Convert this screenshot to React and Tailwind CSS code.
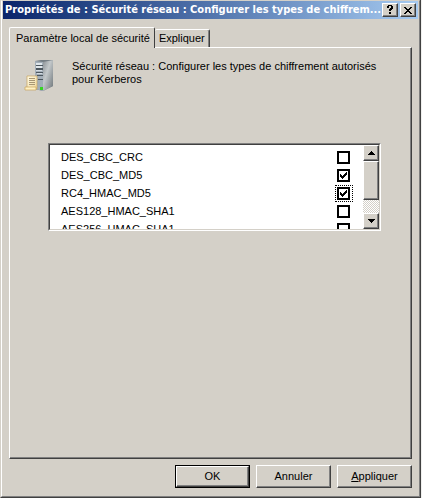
import { useState } from "react";

const raised =
  "border border-t-white border-l-white border-r-[#404040] border-b-[#404040] shadow-[inset_-1px_-1px_0_#808080] bg-[#d4d0c8]";

const encryptionTypes = [
  { id: "des-crc", label: "DES_CBC_CRC", checked: false },
  { id: "des-md5", label: "DES_CBC_MD5", checked: true },
  { id: "rc4", label: "RC4_HMAC_MD5", checked: true },
  { id: "aes128", label: "AES128_HMAC_SHA1", checked: false },
  { id: "aes256", label: "AES256_HMAC_SHA1", checked: false },
];

function ServerIcon() {
  return (
    <svg width="32" height="32" viewBox="0 0 32 32" className="flex-none" aria-hidden="true">
      <defs>
        <linearGradient id="side" x1="0" y1="0" x2="1" y2="1">
          <stop offset="0" stopColor="#8b9196" />
          <stop offset="0.4" stopColor="#c3c8ca" />
          <stop offset="1" stopColor="#6d7478" />
        </linearGradient>
        <linearGradient id="paper" x1="0" y1="0" x2="1" y2="1">
          <stop offset="0" stopColor="#fffbe6" />
          <stop offset="1" stopColor="#efd699" />
        </linearGradient>
      </defs>
      <path d="M11 1 L17 0 L29 0 L29 26 L19 31 L11 29 Z" fill="#747d84" />
      <path d="M19 2 L29 0 V26 L19 31 Z" fill="url(#side)" />
      <path d="M11 1 L19 2 V31 L11 29 Z" fill="#a3aeb8" />
      <path d="M12 3h6v2h-6z M12 6h6v2h-6z" fill="#dfe6eb" />
      <path d="M12 5h7v1h-7z M12 8h7v2h-7z M12 12h7v1h-7z M13 15h6v1h-6z M14 19h5v1h-5z" fill="#4c565e" />
      <path d="M12 10h6v1h-6z M13 13h5v1h-5z" fill="#d2dae1" />
      <path d="M16 27h3v3h-3z" fill="#35d421" />
      <path d="M3 16 H13 V29 H3 Z" fill="url(#paper)" stroke="#c9a45c" strokeWidth="0.7" />
      <path d="M5 18.5h6 M5 20.5h6 M5 22.5h6 M5 24.5h6" stroke="#a89674" />
      <path d="M1 27 H12 V30 H1 Z" fill="#fff1c4" stroke="#c9a45c" strokeWidth="0.7" />
    </svg>
  );
}

function TitleButton({ label, children }) {
  return (
    <button type="button" aria-label={label} className={`flex h-3.5 w-4 items-center justify-center ${raised}`}>
      {children}
    </button>
  );
}

function TitleBar() {
  return (
    <header className="flex h-[18px] items-center justify-between bg-linear-to-r from-[#0a246a] to-[#a6caf0] px-0.5">
      <h1 className="font-['DejaVu_Sans_Condensed','DejaVu_Sans',sans-serif] text-[11px] leading-[18px] font-bold whitespace-nowrap text-white">
        Propriétés de : Sécurité réseau : Configurer les types de chiffrem...
      </h1>
      <div className="flex gap-0.5">
        <TitleButton label="Aide">
          <svg width="8" height="10" viewBox="0 0 8 10" shapeRendering="crispEdges">
            <path d="M2 0h4v1h1v3h-1v1h-1v1h-2v-2h1v-1h1v-2h-2v2h-2v-2h1z M3 7h2v2h-2z" />
          </svg>
        </TitleButton>
        <TitleButton label="Fermer">
          <svg width="8" height="7" viewBox="0 0 8 7" shapeRendering="crispEdges">
            <path d="M0 0h2v1h1v1h2v-1h1v-1h2v1h-1v1h-1v1h-1v1h1v1h1v1h1v1h-2v-1h-1v-1h-2v1h-1v1h-2v-1h1v-1h1v-1h1v-1h-1v-1h-1v-1h-1z" />
          </svg>
        </TitleButton>
      </div>
    </header>
  );
}

function EncryptionRow({ item, focused, onToggle, onFocus }) {
  return (
    <li className="flex h-[18px] items-center justify-between pr-2.5 pl-[11px]">
      <label htmlFor={item.id}>{item.label}</label>
      <span
        className={`relative h-[17px] w-[18px] border border-dotted p-px ${
          focused ? "border-black" : "border-transparent"
        }`}
      >
        <input
          id={item.id}
          type="checkbox"
          checked={item.checked}
          onChange={onToggle}
          onFocus={onFocus}
          className="peer block size-[13px] appearance-none border-2 border-black bg-white outline-none"
        />
        <svg
          width="7"
          height="7"
          viewBox="0 0 7 7"
          shapeRendering="crispEdges"
          className="pointer-events-none invisible absolute top-1 left-1 peer-checked:visible"
        >
          <path d="M0 2h1v1h1v1h1v-1h1v-1h1v-1h1v-1h1v3h-1v1h-1v1h-1v1h-1v1h-1v-1h-1v-1h-1z" />
        </svg>
      </span>
    </li>
  );
}

function ScrollBar() {
  return (
    <div className="flex w-4 flex-none flex-col bg-[repeating-conic-gradient(#ffffff_0_25%,#d4d0c8_0_50%)] bg-[length:2px_2px]">
      <button type="button" aria-label="Défiler vers le haut" className={`flex h-4 items-center justify-center ${raised}`}>
        <svg width="7" height="4" viewBox="0 0 7 4" shapeRendering="crispEdges">
          <path d="M3 0h1v1h1v1h1v1h1v1h-7v-1h1v-1h1v-1h1z" />
        </svg>
      </button>
      <div className={`h-[39px] ${raised}`} />
      <button
        type="button"
        aria-label="Défiler vers le bas"
        className={`mt-auto flex h-4 items-center justify-center ${raised}`}
      >
        <svg width="7" height="4" viewBox="0 0 7 4" shapeRendering="crispEdges">
          <path d="M0 0h7v1h-1v1h-1v1h-1v1h-1v-1h-1v-1h-1v-1h-1z" />
        </svg>
      </button>
    </div>
  );
}

export default function App() {
  const [items, setItems] = useState(encryptionTypes);
  const [focusedId, setFocusedId] = useState("rc4");

  const toggle = (id) =>
    setItems(items.map((item) => (item.id === id ? { ...item, checked: !item.checked } : item)));

  return (
    <div className="flex min-h-screen flex-col bg-[#f0f0ee] pr-px font-['Liberation_Sans',Arial,sans-serif] text-[11px] leading-[13px] text-black">
      <div className="flex flex-1 flex-col border-r border-b border-l border-r-[#404040] border-b-[#404040] border-l-[#d4d0c8] bg-[#d4d0c8]">
        <div className="flex flex-1 flex-col border-t border-r border-b border-l border-t-[#d4d0c8] border-r-[#808080] border-b-[#808080] border-l-white px-px">
          <TitleBar />

          <main className="flex flex-1 flex-col px-1.5 pt-2 pb-2">
            <div role="tablist" className="flex items-end">
              <button
                type="button"
                role="tab"
                aria-selected="true"
                className="relative z-10 -mb-px h-[21px] rounded-t-xs border-t border-r border-l border-t-white border-r-[#404040] border-l-white bg-[#d4d0c8] pr-1 pl-1.5"
              >
                Paramètre local de sécurité
              </button>
              <button
                type="button"
                role="tab"
                aria-selected="false"
                className="h-[18px] rounded-t-xs border-t border-r border-t-white border-r-[#404040] px-1 shadow-[inset_-1px_0_0_#808080]"
              >
                Expliquer
              </button>
            </div>

            <section
              role="tabpanel"
              className="flex-1 border border-t-white border-r-[#404040] border-b-[#404040] border-l-white pr-[30px] pl-[38px] shadow-[inset_-1px_-1px_0_#808080]"
            >
              <div className="-ml-6 flex gap-4 pt-3">
                <ServerIcon />
                <p className="max-w-[320px]">
                  Sécurité réseau : Configurer les types de chiffrement autorisés pour Kerberos
                </p>
              </div>

              <div className="mt-[51px] flex h-[88px] border border-t-[#808080] border-r-white border-b-white border-l-[#808080] bg-white">
                <div className="flex flex-1 border border-t-[#404040] border-r-[#d4d0c8] border-b-[#d4d0c8] border-l-[#404040]">
                  <ul className="flex-1 overflow-hidden pt-[3px]">
                    {items.map((item) => (
                      <EncryptionRow
                        key={item.id}
                        item={item}
                        focused={item.id === focusedId}
                        onToggle={() => toggle(item.id)}
                        onFocus={() => setFocusedId(item.id)}
                      />
                    ))}
                  </ul>
                  <ScrollBar />
                </div>
              </div>
            </section>

            <footer className="mt-1.5 flex justify-end gap-1.5">
              <button type="button" className="h-[23px] w-[75px] border border-black">
                <span className={`flex h-full items-center justify-center ${raised}`}>OK</span>
              </button>
              <button type="button" className={`h-[23px] w-[75px] ${raised}`}>
                Annuler
              </button>
              <button type="button" className={`h-[23px] w-[75px] ${raised}`}>
                <span className="underline">A</span>ppliquer
              </button>
            </footer>
          </main>
        </div>
      </div>
    </div>
  );
}
